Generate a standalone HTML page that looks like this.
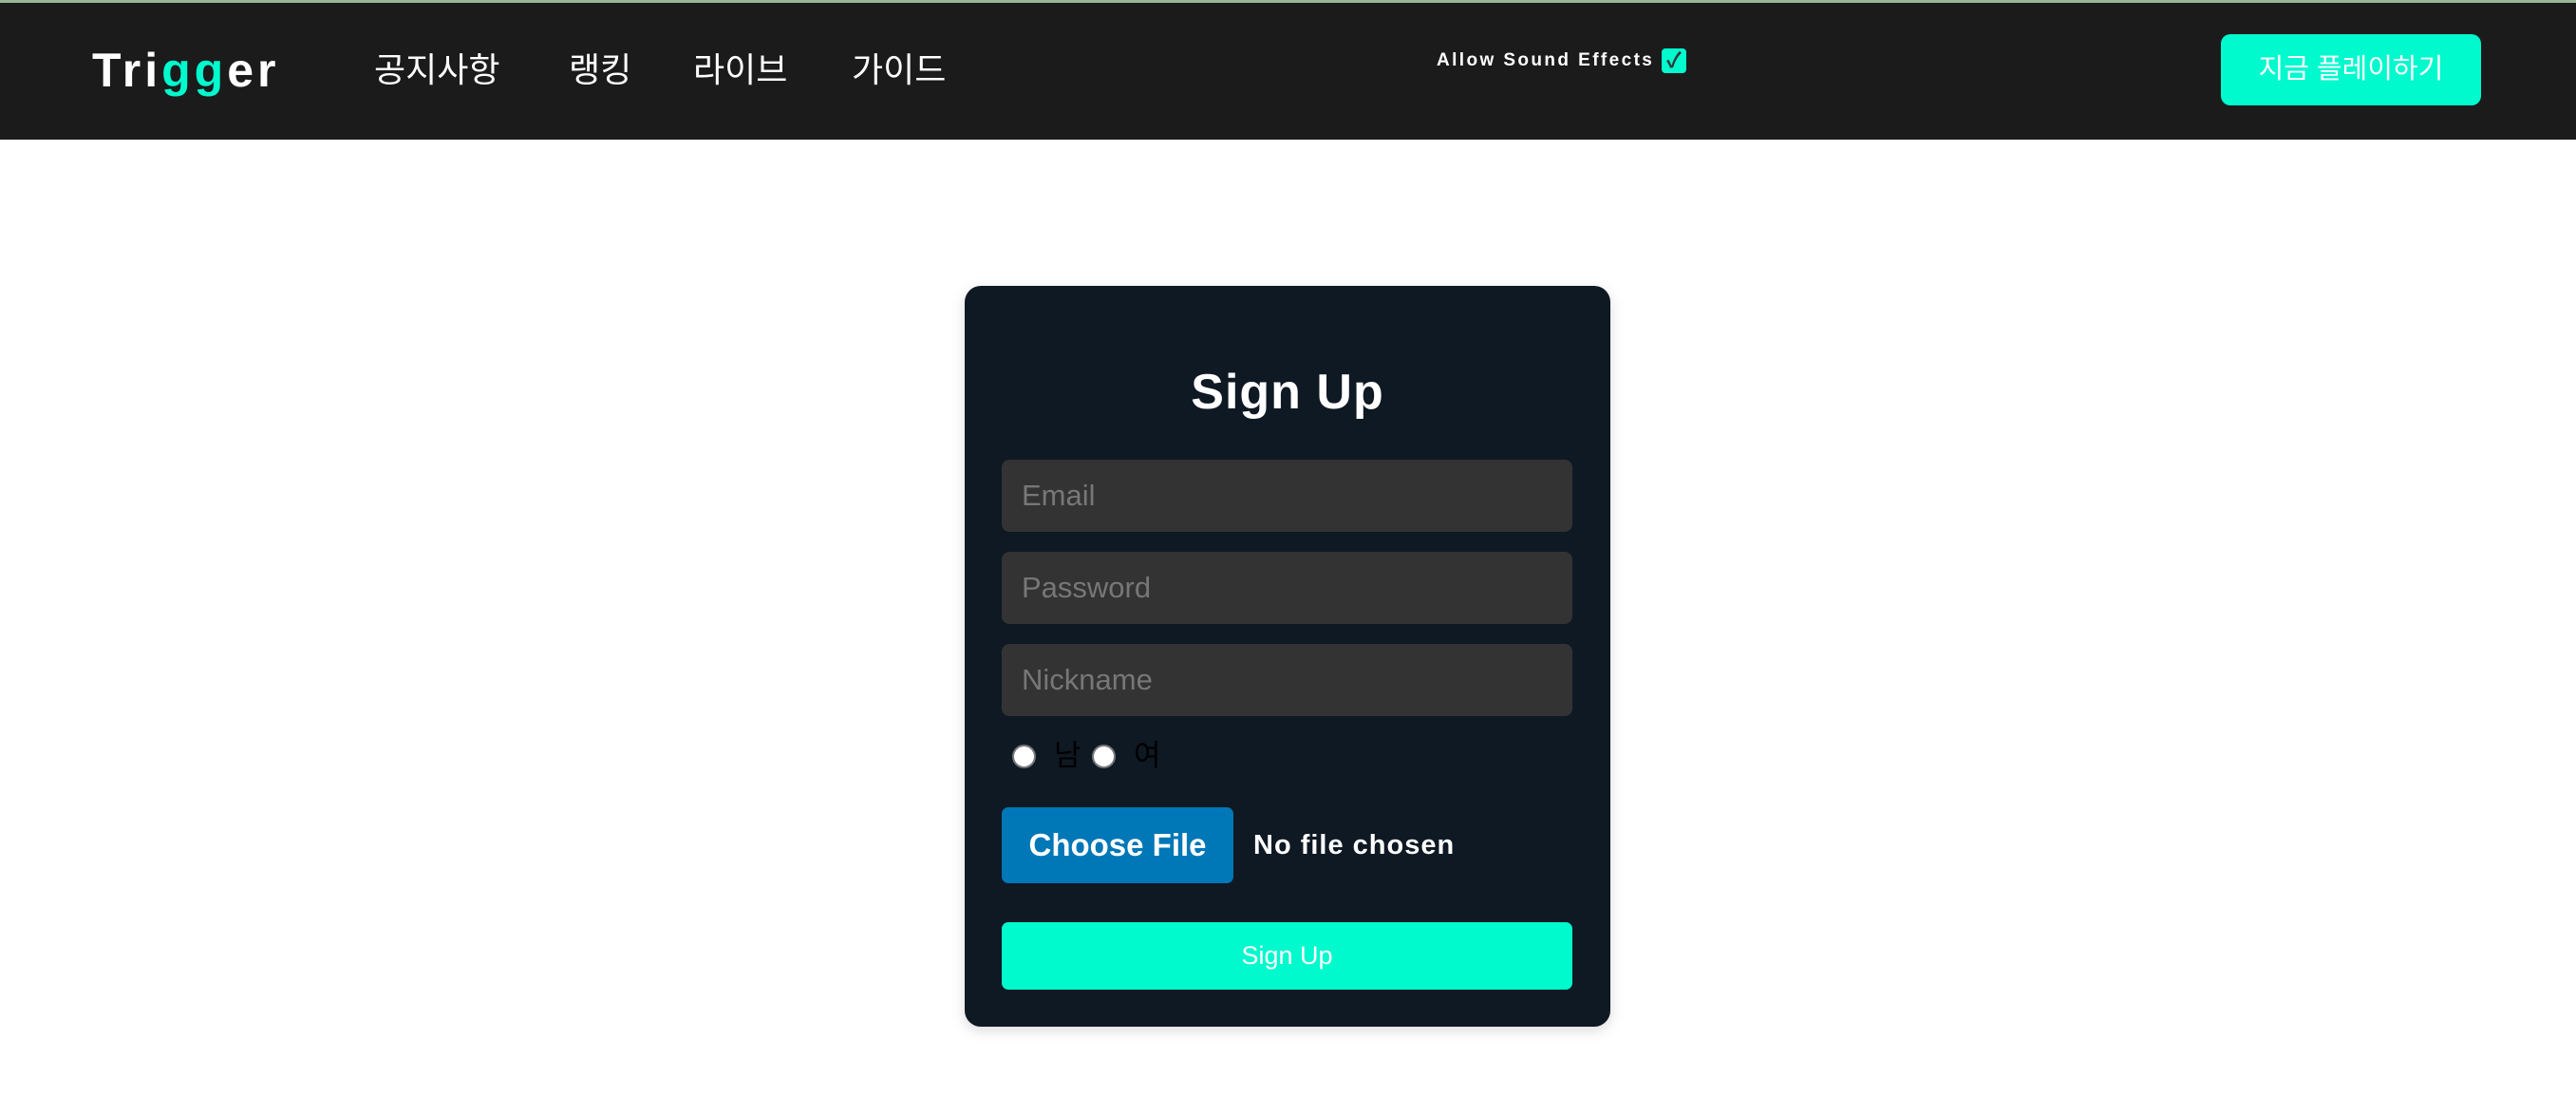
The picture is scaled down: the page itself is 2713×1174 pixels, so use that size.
<!DOCTYPE html>
<html><head><meta charset="utf-8"><style>
*{margin:0;padding:0;box-sizing:border-box}
body{width:2713px;height:1174px;background:#fff;position:relative;overflow:hidden;font-family:"Liberation Sans","Noto Sans CJK KR",sans-serif}
.hdr{position:absolute;left:0;top:0;width:2713px;height:147px;background:#1b1b1b;border-top:3px solid #9ab59a}
.abs{position:absolute;white-space:nowrap}
.logo{left:97px;top:44px;font-size:50px;font-weight:bold;color:#fff;letter-spacing:4px;line-height:60px}
.logo span{color:#00f9cd}
.nav{top:49px;font-size:36px;color:#fff;line-height:50px}
.snd{left:1513px;top:52px;font-size:19px;font-weight:bold;color:#fff;line-height:24px;letter-spacing:2.4px}
.chk{left:1750px;top:51px;width:26px;height:26px;background:#00f9cd;border-radius:4px;color:#333;font-size:22px;line-height:26px;text-align:center;font-weight:bold}
.play{left:2339px;top:36px;width:274px;height:75px;background:#00f9cd;border-radius:10px;color:#fff;font-size:29px;line-height:75px;text-align:center}
.card{left:1016px;top:301px;width:680px;height:780px;background:#0f1923;border-radius:17px;box-shadow:0 4px 14px rgba(0,0,0,.15)}
.title{left:1016px;width:680px;top:383px;text-align:center;font-size:52px;font-weight:bold;color:#fff;line-height:60px;letter-spacing:1px}
.inp{left:1055px;width:601px;height:76px;background:#333;border-radius:8px;color:#777;font-size:31px;line-height:76px;padding-left:21px}
.radio{top:784px;width:25px;height:25px;border-radius:50%;background:#fff;border:2px solid #777}
.rl{top:776px;font-size:31px;color:#000;line-height:40px}
.cf{left:1055px;top:850px;width:244px;height:80px;background:#0077b6;border-radius:7px;color:#fff;font-size:33px;font-weight:bold;line-height:80px;text-align:center}
.nf{left:1320px;top:872px;font-size:29px;font-weight:bold;color:#fff;line-height:36px;letter-spacing:1px}
.sub{left:1055px;top:971px;width:601px;height:71px;background:#00f9cd;border-radius:7px;color:#fff;font-size:27px;line-height:71px;text-align:center}
</style></head><body>
<div class="hdr"></div>
<div class="abs logo">Tri<span>gg</span>er</div>
<div class="abs nav" style="left:394px">공지사항</div>
<div class="abs nav" style="left:599px">랭킹</div>
<div class="abs nav" style="left:730px">라이브</div>
<div class="abs nav" style="left:897px">가이드</div>
<div class="abs snd">Allow Sound Effects</div>
<div class="abs chk">✓</div>
<div class="abs play">지금 플레이하기</div>
<div class="abs card"></div>
<div class="abs title">Sign Up</div>
<div class="abs inp" style="top:484px">Email</div>
<div class="abs inp" style="top:581px">Password</div>
<div class="abs inp" style="top:678px">Nickname</div>
<div class="abs radio" style="left:1066px"></div>
<div class="abs rl" style="left:1110px">남</div>
<div class="abs radio" style="left:1150px"></div>
<div class="abs rl" style="left:1194px">여</div>
<div class="abs cf">Choose File</div>
<div class="abs nf">No file chosen</div>
<div class="abs sub">Sign Up</div>
</body></html>
